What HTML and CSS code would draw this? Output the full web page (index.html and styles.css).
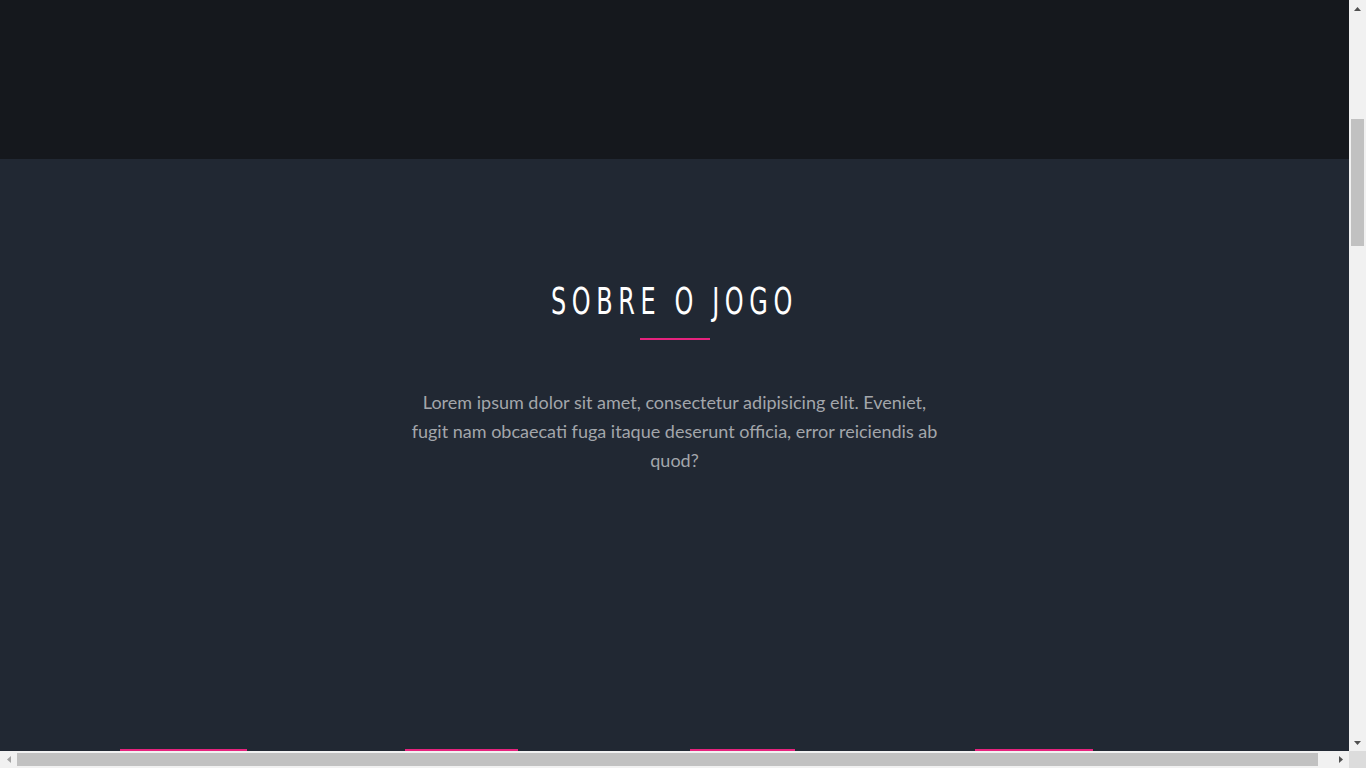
FILE: index.html
```html
<!DOCTYPE html>
<html lang="pt">
<head>
<meta charset="utf-8">
<title>Sobre o Jogo</title>
<link rel="stylesheet" href="styles.css">
</head>
<body>
<div class="page">
  <header class="hero"></header>
  <section class="about">
    <h2 class="about-title"><span class="about-title-text">SOBRE O JOGO</span></h2>
    <div class="about-rule"></div>
    <p class="about-text">Lorem ipsum dolor sit amet, consectetur adipisicing elit. Eveniet, fugit nam obcaecati fuga itaque deserunt officia, error reiciendis ab quod?</p>
  </section>
  <section class="features">
    <div class="features-row">
      <div class="feature"><span class="feature-mark mark-1"></span></div>
      <div class="feature"><span class="feature-mark mark-2"></span></div>
      <div class="feature"><span class="feature-mark mark-3"></span></div>
      <div class="feature"><span class="feature-mark mark-4"></span></div>
    </div>
  </section>
  <footer class="page-end"></footer>
</div>
<div class="sb sb-v" aria-hidden="true">
  <div class="sb-btn"><svg width="7" height="4" viewBox="0 0 7 4"><polygon points="3.5,0 7,4 0,4" fill="#505050"/></svg></div>
  <div class="sb-track sb-track-v"><div class="sb-thumb sb-thumb-v"></div></div>
  <div class="sb-btn"><svg width="7" height="4" viewBox="0 0 7 4"><polygon points="0,0 7,0 3.5,4" fill="#505050"/></svg></div>
</div>
<div class="sb sb-h" aria-hidden="true">
  <div class="sb-btn"><svg width="4" height="7" viewBox="0 0 4 7"><polygon points="4,0 4,7 0,3.5" fill="#a3a3a3"/></svg></div>
  <div class="sb-track sb-track-h"><div class="sb-thumb sb-thumb-h"></div></div>
  <div class="sb-btn"><svg width="4" height="7" viewBox="0 0 4 7"><polygon points="0,0 4,3.5 0,7" fill="#505050"/></svg></div>
</div>
<div class="sb-corner" aria-hidden="true"></div>
<script src="script.js"></script>
</body>
</html>
```
FILE: styles.css
```css
html, body {
  margin: 0;
  padding: 0;
}
body {
  background: #212833;
  font-family: "Lato", "Open Sans", sans-serif;
}
.page {
  width: calc(100vw - 17px);
}
.hero {
  display: block;
  height: 100vh;
  background: #15181d;
}
.about {
  padding: 121px 0 0;
  text-align: center;
}
.about-title {
  margin: 0;
  font-family: "DejaVu Sans Condensed", "DejaVu Sans", sans-serif;
  font-weight: 400;
  font-size: 37px;
  line-height: 43px;
  color: #ffffff;
}
.about-title-text {
  display: inline-block;
  letter-spacing: 0.21em;
  transform: scaleX(0.72);
}
.about-rule {
  width: 70px;
  height: 2px;
  margin: 15px auto 0;
  background: #e6237e;
}
.about-text {
  max-width: 540px;
  margin: 48px auto 0;
  font-size: 18px;
  line-height: 29px;
  color: #a3a6ab;
}
.features {
  padding: 274px 0 0;
}
.features-row {
  display: flex;
  width: 1140px;
  margin: 0 auto;
}
.feature {
  flex: 0 0 285px;
  box-sizing: border-box;
  padding: 0 15px;
  height: 600px;
}
.feature-mark {
  display: block;
  border-top: 2px solid #e6237e;
}
.mark-1 { width: 127px; }
.mark-2 { width: 113px; }
.mark-3 { width: 105px; }
.mark-4 { width: 118px; }
.page-end {
  display: block;
  height: 2280px;
}

/* scrollbar overlay */
.sb {
  position: fixed;
  display: flex;
  background: #f1f1f1;
  z-index: 10;
}
.sb-v {
  top: 0;
  right: 0;
  bottom: 17px;
  width: 17px;
  flex-direction: column;
}
.sb-h {
  left: 0;
  bottom: 0;
  right: 17px;
  height: 17px;
  flex-direction: row;
}
.sb-btn {
  flex: 0 0 17px;
  display: flex;
  align-items: center;
  justify-content: center;
}
.sb-btn svg {
  display: block;
}
.sb-track {
  flex: 1 1 auto;
  display: flex;
}
.sb-track-v {
  flex-direction: column;
  padding: 0 2px;
}
.sb-track-h {
  flex-direction: row;
  padding: 2px 0;
}
.sb-thumb {
  background: #c1c1c1;
}
.sb-thumb-v {
  margin-top: 102px;
  height: 127px;
}
.sb-thumb-h {
  width: 1301px;
}
.sb-corner {
  position: fixed;
  right: 0;
  bottom: 0;
  width: 17px;
  height: 17px;
  background: #dcdcdc;
  z-index: 10;
}
```
FILE: script.js
```js
window.scrollTo(0, 609);
window.addEventListener('load', function () { window.scrollTo(0, 609); });
```
